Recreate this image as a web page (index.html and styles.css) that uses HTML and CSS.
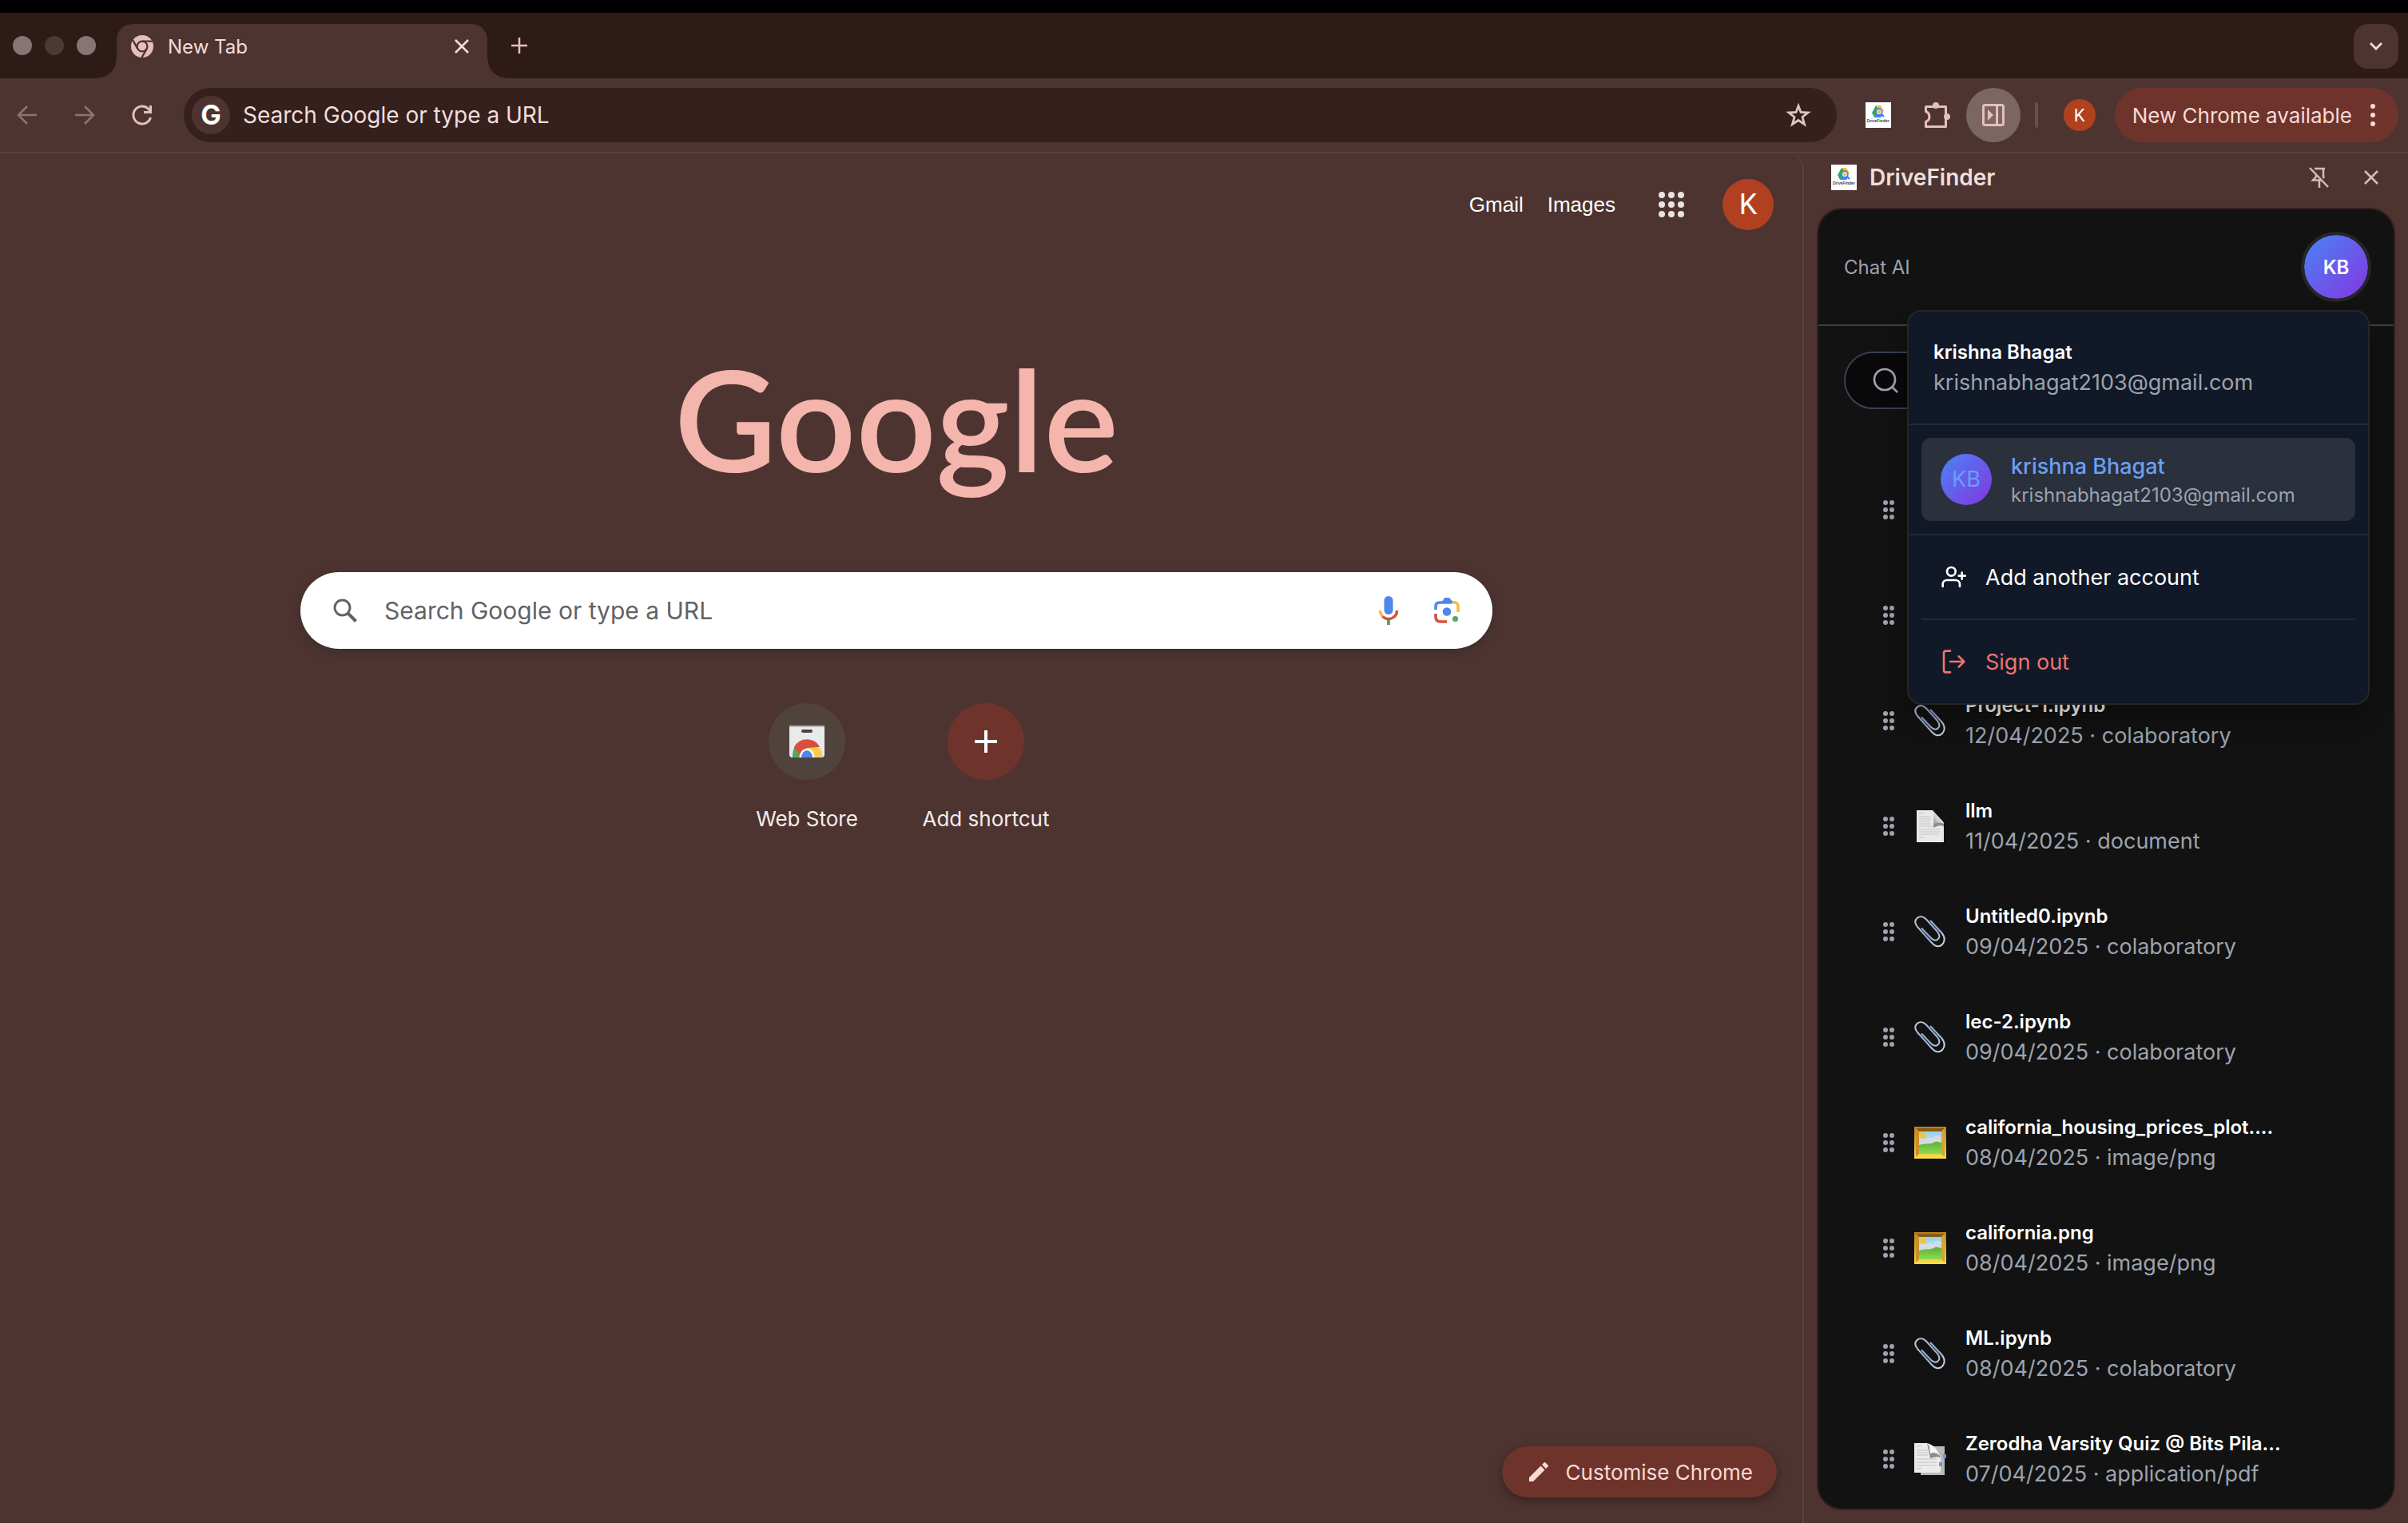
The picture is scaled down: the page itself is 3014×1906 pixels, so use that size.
FILE: index.html
```html
<!DOCTYPE html>
<html lang="en">
<head>
    <title>New Tab</title>
    <meta charset="utf-8" />
    <link rel="stylesheet" href="styles.css">
</head>
<body>
    <!-- shared icons -->
    <svg class="sprite" aria-hidden="true">
        <defs>
            <linearGradient id="gold" x1="0" y1="0" x2="0" y2="1">
                <stop offset="0" stop-color="#b8801c" />
                <stop offset="0.5" stop-color="#dda92c" />
                <stop offset="1" stop-color="#fbe04c" />
            </linearGradient>
            <linearGradient id="sky" x1="0" y1="0" x2="0" y2="1">
                <stop offset="0" stop-color="#8fd3ee" />
                <stop offset="1" stop-color="#e8f4f8" />
            </linearGradient>
            <linearGradient id="grass" x1="0" y1="0" x2="0" y2="1">
                <stop offset="0" stop-color="#5fae3a" />
                <stop offset="1" stop-color="#8ddc4c" />
            </linearGradient>
            <linearGradient id="wire" x1="0" y1="0" x2="1" y2="1">
                <stop offset="0" stop-color="#c3cbd6" />
                <stop offset="0.5" stop-color="#8fa9d2" />
                <stop offset="1" stop-color="#d5dae0" />
            </linearGradient>
            <linearGradient id="fold" x1="0" y1="1" x2="1" y2="0">
                <stop offset="0" stop-color="#8a8a8a" />
                <stop offset="0.6" stop-color="#eeeeee" />
                <stop offset="1" stop-color="#ffffff" />
            </linearGradient>
        </defs>
        <symbol id="i-grip" viewBox="0 0 14 24">
            <g fill="#9ca3af">
                <circle cx="3" cy="3" r="3" /><circle cx="11" cy="3" r="3" />
                <circle cx="3" cy="12" r="3" /><circle cx="11" cy="12" r="3" />
                <circle cx="3" cy="21" r="3" /><circle cx="11" cy="21" r="3" />
            </g>
        </symbol>
        <symbol id="i-clip" viewBox="0 0 40 40">
            <path d="M20.5 6.5 34 21C39 27 38.500 32 35 36C31 40 26 38.500 22 34L4 14C0 9 .8 5.500 3.500 3C6.500 .4 11 .6 15 4.500L29 20C32 24 32 27.500 29.500 29.500C27 31.500 24 31 21 28L9.500 16" fill="none" stroke="url(#wire)" stroke-width="2" stroke-linecap="round" />
        </symbol>
        <symbol id="i-doc" viewBox="0 0 40 40">
            <path d="M3 0H23L37 16V40H3Z" fill="#e9e9e9" />
            <path d="M22 0C25 3 24 10 24 17C28 15 33 15 37 17L36 14Z" fill="url(#fold)" />
            <path d="M24 17C28 15 33 15 37 17V20C32 18 28 20 24 22Z" fill="#8d8d8d" />
            <path d="M6 4H12M6 8H21M6 11H21M6 14H21M6 17H21M6 20H23M6 24H32M6 27H32M6 30H31M6 34H12" stroke="#cfcfcf" stroke-width="1.500" />
        </symbol>
        <symbol id="i-pdf" viewBox="0 0 40 40">
            <path d="M8 4H38V40H8Z" fill="#b9b9b9" />
            <path d="M36 14H40V19H36Z" fill="#5b9be8" />
            <path d="M0 0H16L33 17V37H0Z" fill="#ebebeb" />
            <path d="M16 0C20 3 19 8 20 13C24 11 29 12 32 16L33 18C28 16 24 18 20 19Z" fill="#8d8d8d" />
            <path d="M16 0C20 4 20 8 20 13C24 11 29 12 32 16C29 8 24 2 16 0Z" fill="#f6f6f6" />
            <path d="M3 4H9M3 9H17M3 12H17M3 15H17M3 20H28M3 24H28M3 28H28M3 32H9" stroke="#cfcfcf" stroke-width="1.500" />
            <path d="M31 24H35V29H31Z" fill="#5b9be8" />
        </symbol>
        <symbol id="i-image" viewBox="0 0 40 40">
            <path d="M0 0H40V40H0Z" fill="url(#gold)" />
            <path d="M2 2H38L34 6H6Z" fill="#8a5a14" />
            <path d="M2 2 6 6V34L2 38Z" fill="#c9902a" />
            <path d="M38 2 34 6V34L38 38Z" fill="#d8a436" />
            <path d="M6 6H34V34H6Z" fill="url(#sky)" />
            <path d="M6 17C10 13 13 16 17 14C19 12 21 16 24 14C28 8 32 12 34 12V24H6Z" fill="#d5dae3" />
            <circle cx="11" cy="11" r="4" fill="#f3c43a" />
            <path d="M6 23C14 20 20 23 26 19C29 18 32 20 34 20V34H6Z" fill="url(#grass)" />
        </symbol>
        <symbol id="i-drivefinder" viewBox="0 0 32 32">
            <rect width="32" height="32" fill="#ffffff" />
            <path d="M13 4H19L23 11H16Z" fill="#f9bf2c" />
            <path d="M13 4 8 13 11 19 17 10Z" fill="#34a853" />
            <path d="M13 15H22L19 19H11Z" fill="#4285f4" />
            <circle cx="17" cy="12" r="4" fill="#cfe2ff" stroke="#3b78e7" stroke-width="1.500" />
            <path d="M20 15 23 18" stroke="#3b78e7" stroke-width="2" />
            <circle cx="17" cy="12" r="2" fill="#f9bf2c" />
        </symbol>
        <symbol id="i-close" viewBox="0 0 20 20">
            <path d="M2 2 18 18M18 2 2 18" fill="none" stroke="currentColor" stroke-width="2.500" />
        </symbol>
    </svg>

    <div class="screen-top"></div>

    <header class="tab-strip">
        <div class="lights"><span></span><span class="off"></span><span></span></div>
        <div class="tab">
            <svg class="tab-icon" viewBox="0 0 24 24">
                <circle cx="12" cy="12" r="12" fill="#e6bfba" />
                <circle cx="12" cy="12" r="5.500" fill="none" stroke="#4d3431" stroke-width="2" />
                <path d="M12 6.500H23M16.800 14.800 11.500 24M7.200 14.800 2 5.500" stroke="#4d3431" stroke-width="2" />
            </svg>
            <span class="tab-title">New Tab</span>
            <button class="bare" aria-label="Close tab"><svg class="s-close"><use href="#i-close" /></svg></button>
        </div>
        <button class="bare new-tab" aria-label="New tab">
            <svg width="22" height="22" viewBox="0 0 22 22"><path d="M11 1V21M1 11H21" stroke="#e6bfba" stroke-width="2.500" /></svg>
        </button>
        <button class="tab-search" aria-label="Search tabs">
            <svg width="18" height="12" viewBox="0 0 18 12"><path d="M2 2 9 9 16 2" fill="none" stroke="#f5dcd8" stroke-width="2.800" /></svg>
        </button>
    </header>

    <nav class="toolbar">
        <div class="nav-buttons">
            <button class="bare dim" aria-label="Back">
                <svg width="28" height="28" viewBox="0 0 28 28"><path d="M26 14H4M14 3 3 14 14 25" fill="none" stroke="currentColor" stroke-width="2.700" /></svg>
            </button>
            <button class="bare dim" aria-label="Forward">
                <svg width="28" height="28" viewBox="0 0 28 28"><path d="M2 14H24M14 3 25 14 14 25" fill="none" stroke="currentColor" stroke-width="2.700" /></svg>
            </button>
            <button class="bare" aria-label="Reload">
                <svg width="28" height="28" viewBox="0 0 28 28"><path d="M24.500 17A11 11 0 1 1 22 6.500L24.500 9.500M24.500 2V10.500H16" fill="none" stroke="currentColor" stroke-width="3" /></svg>
            </button>
        </div>
        <div class="omnibox">
            <span class="g-badge">G</span>
            <input type="text" placeholder="Search Google or type a URL" aria-label="Address bar">
            <button class="bare star" aria-label="Bookmark this tab">
                <svg width="32" height="32" viewBox="0 0 32 32"><path d="M16 4.500 19 12.500 28 13 21 18.500 23.500 27.500 16 22.500 8.500 27.500 11 18.500 4 13 13 12.500Z" fill="none" stroke="#dcc6c2" stroke-width="2.800" /></svg>
            </button>
        </div>
        <div class="extensions">
            <button class="bare df" aria-label="Extension"><svg class="s-df"><use href="#i-drivefinder" /></svg><span class="df-name">DriveFinder</span></button>
            <button class="bare" aria-label="Extensions">
                <svg width="36" height="36" viewBox="0 0 36 36">
                    <path d="M3.500 7.500H28.500V32.500H3.500V26.500A7 7 0 0 0 3.500 13.500Z" fill="none" stroke="currentColor" stroke-width="3" stroke-linejoin="round" />
                    <circle cx="16" cy="6" r="4" fill="currentColor" /><circle cx="30" cy="20" r="4" fill="currentColor" />
                </svg>
            </button>
            <button class="panel-toggle" aria-label="Side panel">
                <svg width="28" height="28" viewBox="0 0 28 28">
                    <rect x="1.500" y="1.500" width="25" height="25" rx="2" fill="none" stroke="currentColor" stroke-width="3" />
                    <path d="M18.500 2V26" stroke="currentColor" stroke-width="3" />
                    <path d="M7 7 14 14 7 21Z" fill="currentColor" />
                </svg>
            </button>
        </div>
        <span class="divider"></span>
        <button class="avatar avatar-s" aria-label="Profile">K</button>
        <button class="update">New Chrome available
            <svg width="8" height="28" viewBox="0 0 8 28"><g fill="currentColor"><circle cx="4" cy="3" r="3" /><circle cx="4" cy="14" r="3" /><circle cx="4" cy="25" r="3" /></g></svg>
        </button>
    </nav>

    <div class="content">
        <main class="page">
            <div class="page-top">
                <a href="#">Gmail</a>
                <a href="#">Images</a>
                <button class="bare apps" aria-label="Google apps">
                    <svg width="32" height="32" viewBox="0 0 32 32"><g fill="#ebe3e2">
                        <circle cx="4" cy="4" r="4" /><circle cx="16" cy="4" r="4" /><circle cx="28" cy="4" r="4" />
                        <circle cx="4" cy="16" r="4" /><circle cx="16" cy="16" r="4" /><circle cx="28" cy="16" r="4" />
                        <circle cx="4" cy="28" r="4" /><circle cx="16" cy="28" r="4" /><circle cx="28" cy="28" r="4" />
                    </g></svg>
                </button>
                <button class="avatar avatar-m" aria-label="Google account">K</button>
            </div>

            <h1 class="logo">Google</h1>

            <div class="searchbox">
                <svg width="30" height="30" viewBox="0 0 30 30"><circle cx="11.500" cy="11.500" r="9.500" fill="none" stroke="#5f6368" stroke-width="3" /><path d="M18 18 28.500 28.500" stroke="#5f6368" stroke-width="4" /></svg>
                <input type="text" placeholder="Search Google or type a URL" aria-label="Search Google">
                <button class="bare" aria-label="Search by voice">
                    <svg width="26" height="36" viewBox="0 0 26 36">
                        <rect x="7.500" width="11" height="23" rx="5.500" fill="#4f86ec" />
                        <path d="M2.500 18A10.500 10.500 0 0 0 5.500 25.400" fill="none" stroke="#f2bd42" stroke-width="3.400" />
                        <path d="M5.500 25.400A10.500 10.500 0 0 0 23.500 18" fill="none" stroke="#d94f3d" stroke-width="3.400" />
                        <path d="M13 30V36" stroke="#58a55c" stroke-width="4" />
                    </svg>
                </button>
                <button class="bare" aria-label="Search by image">
                    <svg width="32" height="32" viewBox="0 0 32 32">
                        <path d="M2 15V11Q2 6 7 6H22" fill="none" stroke="#4f86ec" stroke-width="3.600" />
                        <path d="M9.500 6 13 0H19L25 7H9Z" fill="#4f86ec" />
                        <path d="M23 5.500Q30 5.500 30 11V18" fill="none" stroke="#f2bd42" stroke-width="3.600" />
                        <path d="M2 20V24Q2 30 8 30H16" fill="none" stroke="#d94f3d" stroke-width="3.600" />
                        <circle cx="16" cy="17.500" r="5.300" fill="#4f86ec" /><circle cx="26.500" cy="26.500" r="3.600" fill="#58a55c" />
                    </svg>
                </button>
            </div>

            <div class="shortcuts">
                <a class="shortcut" href="#">
                    <span class="tile">
                        <svg width="44" height="40" viewBox="0 0 44 40">
                            <path d="M0 0H44V36Q44 40 40 40H4Q0 40 0 36Z" fill="#e9eaec" />
                            <path d="M0 0H44V2H0Z" fill="#b9b5b4" />
                            <rect x="15" y="5" width="14" height="4" rx="2" fill="#54413e" />
                            <path d="M4 40A18 23 0 0 1 8 24L14 34V40Z" fill="#58a55c" />
                            <path d="M6 27A18 18 0 0 1 38 27L22 28 14 38Z" fill="#d94f3d" />
                            <path d="M22 28H38.500A18 18 0 0 1 41 40H26Z" fill="#f7cf52" />
                            <path d="M12.500 40A9.500 11 0 0 1 31.500 40Z" fill="#ffffff" />
                            <path d="M15 40A7 9 0 0 1 29 40Z" fill="#4f86ec" />
                        </svg>
                    </span>
                    Web Store
                </a>
                <button class="bare shortcut">
                    <span class="tile tile-add"><svg width="28" height="28" viewBox="0 0 28 28"><path d="M14 0V28M0 14H28" stroke="#ffffff" stroke-width="4" /></svg></span>
                    Add shortcut
                </button>
            </div>

            <button class="customise">
                <svg width="24" height="24" viewBox="0 0 24 24"><path d="M0 24V19L14.500 4.500 19.500 9.500 5 24ZM16 3 18.500 .5Q19.500 -.3 20.500 .5L23.500 3.500Q24.300 4.500 23.500 5.500L21 8Z" fill="currentColor" /></svg>
                Customise Chrome
            </button>
        </main>

        <aside class="side">
            <div class="side-bar">
                <span class="df"><svg class="s-df"><use href="#i-drivefinder" /></svg><span class="df-name">DriveFinder</span></span>
                <h2>DriveFinder</h2>
                <button class="bare" aria-label="Unpin">
                    <svg width="26" height="26" viewBox="0 0 26 26"><path d="M1 1 24 25M7 2H20M18 2V12L19 14M9 9V12L5 16.500H16M13 17V26" fill="none" stroke="currentColor" stroke-width="2.500" /></svg>
                </button>
                <button class="bare" aria-label="Close side panel"><svg class="s-close"><use href="#i-close" /></svg></button>
            </div>

            <section class="panel">
                <div class="panel-head">
                    <a href="#">Chat AI</a>
                    <div class="account">
                        <button class="account-btn">KB</button>
                        <div class="menu">
                            <div class="menu-user">
                                <strong>krishna Bhagat</strong>
                                <span>krishnabhagat2103@gmail.com</span>
                            </div>
                            <div class="menu-group">
                                <button class="menu-account">
                                    <span class="kb">KB</span>
                                    <span class="who"><b>krishna Bhagat</b><small>krishnabhagat2103@gmail.com</small></span>
                                </button>
                            </div>
                            <div class="menu-group last">
                                <button class="menu-item">
                                    <svg width="32" height="32" viewBox="0 0 24 24"><g fill="none" stroke="currentColor" stroke-width="2" stroke-linecap="round" stroke-linejoin="round"><path d="M18 21v-2a4 4 0 0 0-4-4H6a4 4 0 0 0-4 4v2" /><circle cx="10" cy="7" r="4" /><path d="M20 8v6M23 11h-6" /></g></svg>
                                    Add another account
                                </button>
                                <hr>
                                <button class="menu-item danger">
                                    <svg width="32" height="32" viewBox="0 0 24 24"><g fill="none" stroke="currentColor" stroke-width="2" stroke-linecap="round" stroke-linejoin="round"><path d="M9 22H5a2 2 0 0 1-2-2V4a2 2 0 0 1 2-2h4M17 17l5-5-5-5M22 12H9" /></g></svg>
                                    Sign out
                                </button>
                            </div>
                        </div>
                    </div>
                </div>

                <label class="file-search">
                    <svg width="32" height="32" viewBox="0 0 32 32"><circle cx="15" cy="15" r="13" fill="none" stroke="#9ca3af" stroke-width="2.700" /><path d="M24 24 31 31" stroke="#9ca3af" stroke-width="2.700" /></svg>
                    <input type="text" aria-label="Search files">
                </label>

                <ul class="files">
                    <li><svg class="grip"><use href="#i-grip" /></svg></li>
                    <li><svg class="grip"><use href="#i-grip" /></svg></li>
                    <li><svg class="grip"><use href="#i-grip" /></svg><svg class="kind"><use href="#i-clip" /></svg><div><b>Project-1.ipynb</b><span>12/04/2025 · colaboratory</span></div></li>
                    <li><svg class="grip"><use href="#i-grip" /></svg><svg class="kind"><use href="#i-doc" /></svg><div><b>llm</b><span>11/04/2025 · document</span></div></li>
                    <li><svg class="grip"><use href="#i-grip" /></svg><svg class="kind"><use href="#i-clip" /></svg><div><b>Untitled0.ipynb</b><span>09/04/2025 · colaboratory</span></div></li>
                    <li><svg class="grip"><use href="#i-grip" /></svg><svg class="kind"><use href="#i-clip" /></svg><div><b>lec-2.ipynb</b><span>09/04/2025 · colaboratory</span></div></li>
                    <li><svg class="grip"><use href="#i-grip" /></svg><svg class="kind"><use href="#i-image" /></svg><div><b>california_housing_prices_plot....</b><span>08/04/2025 · image/png</span></div></li>
                    <li><svg class="grip"><use href="#i-grip" /></svg><svg class="kind"><use href="#i-image" /></svg><div><b>california.png</b><span>08/04/2025 · image/png</span></div></li>
                    <li><svg class="grip"><use href="#i-grip" /></svg><svg class="kind"><use href="#i-clip" /></svg><div><b>ML.ipynb</b><span>08/04/2025 · colaboratory</span></div></li>
                    <li><svg class="grip"><use href="#i-grip" /></svg><svg class="kind"><use href="#i-pdf" /></svg><div><b>Zerodha Varsity Quiz @ Bits Pila...</b><span>07/04/2025 · application/pdf</span></div></li>
                </ul>
            </section>
        </aside>
    </div>
</body>
</html>
```
FILE: styles.css
```css
* {
    box-sizing: border-box;
}
body {
    margin: 0;
    height: 100vh;
    display: flex;
    flex-direction: column;
    overflow: hidden;
    background: #4d3431;
    color: #f5dcd8;
    font-family: Inter, "Liberation Sans", sans-serif;
    font-size: 26px;
}
button, input {
    font: inherit;
    color: inherit;
    border: 0;
    margin: 0;
    padding: 0;
    background: none;
}
a {
    color: inherit;
    text-decoration: none;
}
svg {
    display: block;
    flex: none;
}
input {
    min-width: 0;
    flex: 1;
    outline: 0;
}
input::placeholder {
    color: inherit;
    opacity: 1;
}
.bare {
    display: flex;
    color: #e6bfba;
}
.sprite {
    position: absolute;
    width: 0;
    height: 0;
}
.s-close {
    width: 20px;
    height: 20px;
}
.s-df {
    width: 32px;
    height: 32px;
}
/* extension icon, its name is printed on the lower part */
.df {
    position: relative;
}
.df-name {
    position: absolute;
    left: 0;
    right: 0;
    bottom: 6px;
    color: #333333;
    font-size: 5px;
    font-weight: 600;
    line-height: 6px;
    text-align: center;
}

/* tab strip */
.screen-top {
    height: 16px;
    flex: none;
    background: #000000;
}
.tab-strip {
    height: 82px;
    flex: none;
    display: flex;
    align-items: center;
    padding: 14px 12px 0 16px;
    background: #2e1a17;
}
.lights {
    display: flex;
    gap: 16px;
    margin: 0 26px 14px 0;
}
.lights span {
    width: 24px;
    height: 24px;
    border-radius: 50%;
    background: #857674;
}
.lights .off {
    background: #4b3936;
}
.tab {
    position: relative;
    width: 464px;
    height: 68px;
    display: flex;
    align-items: center;
    padding: 0 22px 12px 18px;
    border-radius: 20px 20px 0 0;
    background: #4d3431;
}
/* curved feet of the active tab */
.tab::before, .tab::after {
    content: "";
    position: absolute;
    bottom: 0;
    width: 24px;
    height: 24px;
}
.tab::before {
    right: 100%;
    background: radial-gradient(circle at 0 0, #2e1a17 23px, #4d3431 24px);
}
.tab::after {
    left: 100%;
    background: radial-gradient(circle at 100% 0, #2e1a17 23px, #4d3431 24px);
}
.tab-icon {
    width: 28px;
    height: 28px;
    margin-right: 18px;
}
.tab-title {
    flex: 1;
    font-size: 24px;
}
.tab .bare {
    color: #f5dcd8;
}
.new-tab {
    margin: 0 auto 14px 29px;
}
.tab-search {
    display: flex;
    align-items: center;
    justify-content: center;
    width: 56px;
    height: 56px;
    margin-bottom: 12px;
    border-radius: 18px;
    background: #4d3431;
}

/* toolbar */
.toolbar {
    flex: none;
    display: flex;
    align-items: center;
    padding: 12px 12px 12px 20px;
    border-bottom: 2px solid #53433f;
}
.nav-buttons {
    display: flex;
    gap: 44px;
    margin-right: 38px;
}
.dim {
    color: #8c736f;
}
.omnibox {
    flex: 1;
    display: flex;
    align-items: center;
    height: 68px;
    padding: 0 32px 0 10px;
    border-radius: 34px;
    background: #35201e;
    font-size: 28px;
    color: #f0dedb;
}
.g-badge {
    width: 48px;
    height: 48px;
    margin-right: 16px;
    border-radius: 50%;
    background: #4d3431;
    color: #ffffff;
    font-size: 34px;
    font-weight: 700;
    line-height: 48px;
    text-align: center;
}
.extensions {
    display: flex;
    align-items: center;
    gap: 18px;
    margin-left: 36px;
}
.extensions .bare + .bare {
    margin-left: 22px;
}
.panel-toggle {
    display: flex;
    align-items: center;
    justify-content: center;
    width: 68px;
    height: 68px;
    border-radius: 50%;
    background: #7c6664;
    color: #e6bfba;
}
.divider {
    width: 4px;
    height: 32px;
    margin: 0 32px 0 18px;
    border-radius: 2px;
    background: #64504c;
}
.avatar {
    flex: none;
    border-radius: 50%;
    background: #b04020;
    color: #ffffff;
    text-align: center;
}
.avatar-s {
    width: 40px;
    height: 40px;
    font-size: 22px;
}
.avatar-m {
    width: 64px;
    height: 64px;
    font-size: 36px;
}
.update {
    display: flex;
    align-items: center;
    gap: 22px;
    height: 68px;
    margin-left: 24px;
    padding: 0 28px 0 22px;
    border-radius: 34px;
    background: #6e342c;
    color: #fbdad5;
    font-size: 26px;
    white-space: nowrap;
}

/* new tab page */
.content {
    flex: 1;
    min-height: 0;
    display: flex;
}
.page {
    flex: 1;
    display: flex;
    flex-direction: column;
    align-items: center;
    padding: 32px 36px 32px 24px;
    border-right: 2px solid #53433f;
    border-top-right-radius: 20px;
}
.page-top {
    align-self: flex-end;
    display: flex;
    align-items: center;
    gap: 30px;
    color: #ffffff;
    font-family: "Liberation Sans", Arial, sans-serif;
}
.apps {
    margin: 0 18px 0 24px;
}
.avatar-m, .avatar-s {
    font-family: Roboto, sans-serif;
}
.logo {
    margin: 115px 0 0;
    color: #f4b5ac;
    font-family: Lato, sans-serif;
    font-size: 176px;
    font-weight: 600;
    line-height: 240px;
}
.searchbox {
    width: 100%;
    max-width: 1492px;
    height: 96px;
    display: flex;
    align-items: center;
    gap: 44px;
    margin-top: 73px;
    padding: 0 41px;
    border-radius: 48px;
    background: #ffffff;
    color: #5f6368;
    font-size: 30px;
    box-shadow: 0 4px 12px rgba(32, 33, 36, 0.35);
}
.searchbox input {
    margin-left: -10px;
}
.shortcuts {
    display: flex;
    margin-top: 68px;
}
.shortcut {
    width: 224px;
    display: flex;
    flex-direction: column;
    align-items: center;
    gap: 33px;
    color: #f3eceb;
    font-size: 26px;
    line-height: 32px;
}
.tile {
    display: flex;
    align-items: center;
    justify-content: center;
    width: 96px;
    height: 96px;
    border-radius: 50%;
    background: #50433e;
}
.tile-add {
    background: #6e342c;
}
.customise {
    display: flex;
    align-items: center;
    gap: 22px;
    align-self: flex-end;
    height: 64px;
    margin: auto -4px 0 0;
    padding: 0 30px 0 34px;
    border-radius: 32px;
    background: #6e342c;
    color: #fbdad5;
    font-size: 26px;
    box-shadow: 0 4px 12px rgba(0, 0, 0, 0.35);
}

/* side panel */
.side {
    width: 756px;
    flex: none;
    display: flex;
    flex-direction: column;
    padding: 0 16px 16px;
}
.side-bar {
    display: flex;
    align-items: center;
    height: 68px;
    padding: 0 20px 8px 18px;
}
.side-bar h2 {
    flex: 1;
    margin: 0 0 0 16px;
    color: #f0dedb;
    font-size: 28px;
    font-weight: 600;
}
.side-bar .bare {
    margin-left: 42px;
    color: #d3bdb9;
}
.panel {
    flex: 1;
    min-height: 0;
    overflow: hidden;
    border: 2px solid #35201e;
    border-radius: 32px;
    background: #121212;
    color: #9ca3af;
    font-size: 27px;
}
.panel-head {
    display: flex;
    align-items: center;
    justify-content: space-between;
    height: 146px;
    padding: 0 28px 0 32px;
    border-bottom: 2px solid #374151;
}
.panel-head > a {
    font-size: 24px;
}
.account {
    position: relative;
}
.account-btn {
    display: block;
    width: 88px;
    height: 88px;
    border: 4px solid #262626;
    border-radius: 50%;
    background: linear-gradient(135deg, #4a84f5, #8435e0) padding-box;
    color: #ffffff;
    font-size: 24px;
    font-weight: 600;
}
.menu {
    position: absolute;
    z-index: 2;
    top: 98px;
    right: 2px;
    width: 579px;
    border: 2px solid #262626;
    border-radius: 18px;
    background: #111827;
    box-shadow: 0 20px 30px rgba(0, 0, 0, 0.3);
}
.menu-user {
    padding: 32px 32px 32px 31px;
    line-height: 38px;
}
.menu-user strong, .menu-user span {
    display: block;
}
.menu-user strong {
    color: #ffffff;
    font-size: 24px;
    font-weight: 600;
}
.menu-group {
    padding: 16px;
    border-top: 2px solid #1f2937;
}
.menu-account {
    width: 100%;
    height: 104px;
    display: flex;
    align-items: center;
    gap: 24px;
    padding: 0 24px;
    border-radius: 12px;
    background: #2a303c;
    text-align: left;
}
.kb {
    width: 64px;
    height: 64px;
    border-radius: 50%;
    background: linear-gradient(135deg, #4a84f5, #8435e0);
    color: #6b9ff5;
    line-height: 64px;
    text-align: center;
}
.who b, .who small {
    display: block;
}
.who b {
    color: #6b9ff5;
    font-weight: 500;
    line-height: 40px;
}
.who small {
    font-size: 24px;
    line-height: 32px;
}
.menu-item {
    width: 100%;
    height: 72px;
    display: flex;
    align-items: center;
    gap: 24px;
    padding: 0 24px;
    color: #ffffff;
}
.danger {
    color: #ec7570;
}
.menu hr {
    height: 2px;
    margin: 16px 0;
    border: 0;
    background: #1f2937;
}
.file-search {
    display: flex;
    align-items: center;
    height: 72px;
    margin: 32px 32px 60px;
    padding: 0 34px;
    border: 2px solid #374151;
    border-radius: 36px;
    background: #090909;
}
.files {
    margin: 0;
    padding: 0 81px;
    list-style: none;
}
.files li {
    height: 132px;
    display: flex;
    align-items: center;
}
.files div {
    min-width: 0;
    white-space: nowrap;
}
.files b, .files span {
    display: block;
    line-height: 38px;
}
.files b {
    color: #ffffff;
    font-size: 24px;
    font-weight: 600;
}
.grip {
    width: 14px;
    height: 24px;
    margin-right: 25px;
}
.kind {
    width: 40px;
    height: 40px;
    margin-right: 24px;
}
```
